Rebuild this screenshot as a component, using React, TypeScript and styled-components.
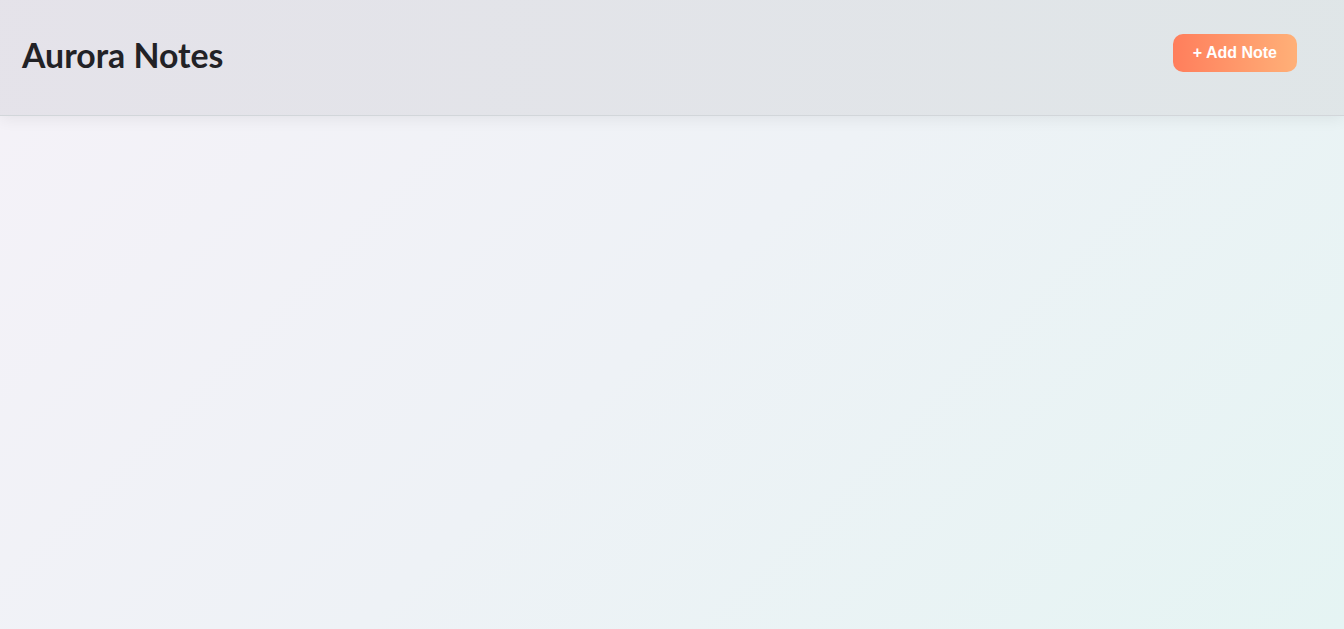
import styled, { createGlobalStyle } from 'styled-components';

const GlobalStyle = createGlobalStyle`
  html, body {
    margin: 0;
    padding: 0;
  }

  html {
    background: linear-gradient(135deg, #f5f2f8 0%, #eef2f6 50%, #e5f4f3 100%) fixed;
  }

  body {
    font-family: Lato, 'Noto Sans', sans-serif;
    color: #222;
  }
`;

const Page = styled.div`
  min-height: 100vh;
  display: flex;
  flex-direction: column;
`;

const Header = styled.header`
  display: flex;
  align-items: center;
  justify-content: space-between;

  height: 116px;
  box-sizing: border-box;
  padding: 0 47px 0 22px;

  background: linear-gradient(90deg, rgba(228, 226, 233, 0.95), rgba(223, 229, 231, 0.95));
  border-bottom: 1px solid #d2d6da;
  box-shadow: 0 4px 14px rgba(0, 0, 0, 0.06);
`;

const Title = styled.h1`
  margin: 0 0 6px;
  font-size: 33.8px;
  font-weight: 700;
  color: #222226;
`;

const AddButton = styled.button`
  height: 38px;
  padding: 0 20px;
  margin-bottom: 10px;

  border: none;
  border-radius: 10px;
  background: linear-gradient(90deg, #ff7e5c, #ffb078);
  color: #fff;

  font-family: 'Liberation Sans', Arial, sans-serif;
  font-size: 16px;
  font-weight: 700;
  cursor: pointer;
`;

const Board = styled.main`
  flex: 1;
`;

export default function App() {
  return (
    <>
      <GlobalStyle />
      <Page>
        <Header>
          <Title>Aurora Notes</Title>
          <AddButton>+ Add Note</AddButton>
        </Header>
        <Board />
      </Page>
    </>
  );
}
